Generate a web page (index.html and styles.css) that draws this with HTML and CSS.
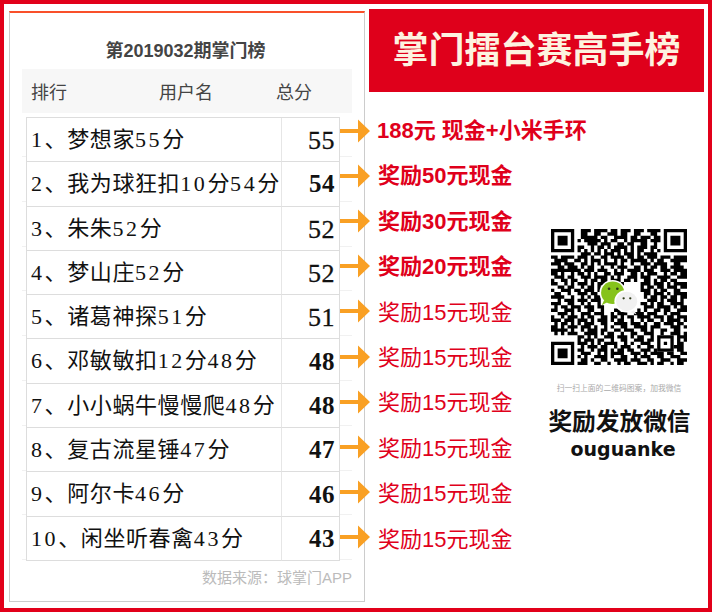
FILE: index.html
```html
<!DOCTYPE html>
<html lang="zh-CN">
<head>
<meta charset="utf-8">
<title>掌门擂台赛高手榜</title>
<link rel="stylesheet" href="styles.css">
</head>
<body>
<svg width="0" height="0" class="defs" aria-hidden="true">
  <symbol id="arrow" viewBox="0 0 30 24"><path d="M0 10h18V0.500l12 11.500-12 11.500V14H0z"/></symbol>
</svg>
<main class="frame">
  <section class="card">
    <h1 class="card-title">第2019032期掌门榜</h1>
    <div class="card-head"><span>排行</span><span>用户名</span><span>总分</span></div>
    <div class="band">
      <div class="rank-table">
        <div class="name"><span class="num">1</span>、梦想家<span class="num">55</span>分</div><div class="score">55</div>
        <div class="name"><span class="num">2</span>、我为球狂扣<span class="num">10</span>分<span class="num">54</span>分</div><div class="score strong">54</div>
        <div class="name"><span class="num">3</span>、朱朱<span class="num">52</span>分</div><div class="score">52</div>
        <div class="name"><span class="num">4</span>、梦山庄<span class="num">52</span>分</div><div class="score">52</div>
        <div class="name"><span class="num">5</span>、诸葛神探<span class="num">51</span>分</div><div class="score">51</div>
        <div class="name"><span class="num">6</span>、邓敏敏扣<span class="num">12</span>分<span class="num">48</span>分</div><div class="score strong">48</div>
        <div class="name"><span class="num">7</span>、小小蜗牛慢慢爬<span class="num">48</span>分</div><div class="score strong">48</div>
        <div class="name"><span class="num">8</span>、复古流星锤<span class="num">47</span>分</div><div class="score strong">47</div>
        <div class="name"><span class="num">9</span>、阿尔卡<span class="num">46</span>分</div><div class="score strong">46</div>
        <div class="name"><span class="num">10</span>、闲坐听春禽<span class="num">43</span>分</div><div class="score strong">43</div>
      </div>
    </div>
    <p class="source">数据来源：球掌门APP</p>
  </section>
  <section class="side">
    <div class="banner">掌门擂台赛高手榜</div>
    <div class="lower">
      <div class="arrows">
        <svg class="arrow"><use href="#arrow"/></svg>
        <svg class="arrow"><use href="#arrow"/></svg>
        <svg class="arrow"><use href="#arrow"/></svg>
        <svg class="arrow"><use href="#arrow"/></svg>
        <svg class="arrow"><use href="#arrow"/></svg>
        <svg class="arrow"><use href="#arrow"/></svg>
        <svg class="arrow"><use href="#arrow"/></svg>
        <svg class="arrow"><use href="#arrow"/></svg>
        <svg class="arrow"><use href="#arrow"/></svg>
        <svg class="arrow"><use href="#arrow"/></svg>
      </div>
      <ul class="prizes">
        <li class="prize lead">188元 现金+小米手环</li>
        <li class="prize top">奖励50元现金</li>
        <li class="prize top">奖励30元现金</li>
        <li class="prize top">奖励20元现金</li>
        <li class="prize">奖励15元现金</li>
        <li class="prize">奖励15元现金</li>
        <li class="prize">奖励15元现金</li>
        <li class="prize">奖励15元现金</li>
        <li class="prize">奖励15元现金</li>
        <li class="prize">奖励15元现金</li>
      </ul>
      <aside class="contact">
        <svg class="qr" viewBox="0 0 41 41" aria-label="二维码">
          <path class="qr-solid" fill-rule="evenodd" d="M0 0h7v7H0zM1 1v5h5V1zM2 2h3v3H2zM34 0h7v7h-7zM35 1v5h5V1zM36 2h3v3h-3zM0 34h7v7H0zM1 35v5h5v-5zM2 36h3v3H2zM32 32h5v5h-5zM33 33v3h3v-3zM34 34h1v1h-1z"/>
          <path class="qr-data" d="M9 0h3M13 0h4M18 0h2M21 0h3M25 0h3M29 0h4M9 1h2M13 1h2M17 1h3M21 1h2M25 1h2M30 1h2M9 2h5M15 2h2M19 2h4M24 2h2M27 2h3M31 2h2M8 3h1M10 3h5M16 3h1M18 3h2M22 3h1M24 3h5M30 3h3M11 4h3M15 4h3M20 4h2M23 4h2M27 4h2M31 4h1M8 5h2M12 5h1M14 5h2M17 5h1M19 5h4M24 5h1M26 5h3M30 5h2M8 6h1M10 6h1M12 6h1M14 6h1M16 6h1M18 6h3M22 6h1M24 6h1M26 6h2M30 6h1M32 6h1M9 7h3M13 7h2M16 7h3M20 7h1M22 7h3M26 7h1M28 7h4M0 8h2M3 8h3M6 8h1M8 8h3M12 8h1M15 8h2M18 8h4M23 8h2M26 8h2M29 8h3M33 8h3M37 8h4M1 9h4M7 9h2M10 9h1M12 9h3M16 9h1M19 9h1M21 9h2M24 9h5M30 9h1M32 9h2M36 9h3M39 9h2M0 10h3M4 10h2M6 10h1M9 10h2M12 10h1M14 10h1M16 10h4M21 10h1M24 10h1M27 10h3M31 10h4M37 10h2M2 11h2M5 11h3M9 11h1M11 11h2M15 11h1M18 11h1M20 11h3M25 11h2M28 11h1M30 11h2M33 11h2M36 11h4M0 12h6M6 12h3M10 12h3M14 12h3M19 12h1M21 12h1M23 12h4M28 12h3M33 12h3M37 12h4M0 13h2M3 13h1M6 13h1M8 13h2M11 13h1M13 13h1M16 13h2M19 13h3M24 13h2M27 13h1M29 13h3M34 13h1M36 13h2M39 13h2M1 14h3M5 14h2M9 14h3M13 14h4M18 14h1M20 14h1M23 14h3M27 14h3M32 14h4M38 14h3M0 15h1M3 15h2M6 15h2M10 15h1M12 15h2M15 15h2M18 15h3M22 15h2M25 15h1M28 15h2M31 15h1M33 15h2M36 15h2M0 16h2M4 16h1M6 16h1M8 16h3M12 16h1M14 16h3M19 16h1M21 16h1M27 16h3M31 16h3M35 16h1M37 16h4M2 17h2M5 17h2M9 17h1M11 17h2M14 17h1M27 17h1M29 17h2M32 17h2M35 17h3M39 17h2M0 18h1M3 18h3M7 18h2M10 18h3M14 18h2M27 18h3M31 18h1M33 18h2M37 18h2M1 19h2M5 19h1M8 19h3M12 19h2M28 19h2M31 19h3M35 19h1M37 19h4M0 20h4M6 20h1M9 20h1M11 20h1M13 20h2M28 20h1M30 20h2M33 20h2M36 20h2M39 20h2M2 21h1M4 21h3M8 21h3M12 21h3M29 21h3M33 21h1M35 21h3M39 21h1M0 22h3M5 22h2M9 22h1M11 22h1M14 22h1M27 22h2M30 22h1M32 22h2M36 22h4M1 23h1M3 23h2M6 23h3M10 23h3M14 23h2M28 23h3M32 23h4M37 23h1M39 23h2M0 24h2M4 24h3M8 24h1M11 24h2M15 24h1M19 24h2M26 24h1M28 24h1M31 24h2M34 24h2M38 24h3M2 25h3M6 25h1M9 25h3M13 25h3M18 25h1M20 25h3M25 25h3M29 25h3M34 25h1M36 25h3M0 26h1M3 26h1M5 26h3M9 26h1M11 26h2M15 26h2M18 26h2M21 26h1M23 26h2M26 26h4M31 26h3M35 26h2M38 26h3M0 27h3M4 27h3M8 27h3M12 27h1M14 27h3M18 27h1M20 27h2M24 27h1M27 27h1M29 27h2M33 27h1M35 27h4M40 27h1M1 28h1M3 28h2M6 28h1M8 28h1M10 28h3M15 28h2M19 28h4M24 28h3M28 28h1M31 28h2M34 28h3M38 28h2M0 29h2M3 29h1M5 29h3M9 29h3M13 29h1M16 29h1M18 29h1M21 29h2M25 29h4M30 29h3M36 29h3M40 29h1M0 30h5M6 30h1M9 30h1M11 30h3M15 30h2M19 30h2M22 30h3M27 30h2M30 30h1M33 30h2M37 30h2M1 31h1M3 31h1M5 31h3M10 31h4M15 31h1M17 31h2M21 31h1M24 31h2M28 31h3M33 31h1M36 31h3M40 31h1M8 32h2M11 32h1M13 32h1M16 32h3M20 32h3M24 32h1M26 32h2M30 32h1M38 32h3M8 33h1M10 33h3M14 33h2M18 33h1M21 33h2M25 33h3M29 33h2M38 33h1M40 33h1M8 34h3M12 34h1M14 34h1M16 34h4M22 34h1M24 34h1M27 34h3M38 34h2M9 35h1M11 35h3M15 35h2M19 35h1M21 35h3M26 35h1M29 35h2M37 35h3M8 36h2M12 36h1M14 36h3M18 36h1M20 36h2M23 36h2M27 36h3M31 36h1M38 36h2M9 37h3M14 37h1M16 37h1M18 37h4M24 37h3M28 37h1M30 37h4M35 37h2M39 37h2M8 38h1M10 38h1M13 38h4M18 38h1M21 38h2M25 38h1M27 38h3M32 38h2M36 38h3M9 39h2M12 39h1M15 39h2M19 39h4M24 39h3M29 39h2M33 39h3M38 39h3M8 40h3M13 40h2M17 40h1M20 40h1M22 40h2M26 40h3M30 40h1M32 40h2M36 40h1M38 40h2"/>
          <ellipse class="qr-halo" cx="18.600" cy="19.200" rx="4" ry="3.800"/>
          <path class="qr-green" d="M15.300 23l.7-1.500 1.500.3z"/>
          <ellipse class="qr-green" cx="18.600" cy="19.200" rx="3.500" ry="3.400"/>
          <circle class="qr-eye" cx="17.500" cy="18" r=".4"/>
          <circle class="qr-eye" cx="20" cy="18" r=".4"/>
          <ellipse class="qr-halo" cx="22.800" cy="21.800" rx="3.700" ry="3.400"/>
          <path class="qr-bubble" d="M25 24.500l.8 1.200-1.900-.6z"/>
          <ellipse class="qr-bubble" cx="22.800" cy="21.800" rx="3.200" ry="2.900"/>
          <circle class="qr-eye" cx="21.900" cy="20.900" r=".35"/>
          <circle class="qr-eye" cx="23.900" cy="20.900" r=".35"/>
        </svg>
        <p class="caption">扫一扫上面的二维码图案，加我微信</p>
        <p class="contact-title">奖励发放微信</p>
        <p class="contact-id">ouguanke</p>
      </aside>
    </div>
  </section>
</main>
</body>
</html>
```
FILE: styles.css
```css
* { box-sizing: border-box; }
html, body { margin: 0; padding: 0; }
body {
  width: 712px;
  height: 612px;
  overflow: hidden;
  background: #fff;
  font-family: "Liberation Sans", "Noto Sans CJK SC", sans-serif;
}
.defs { position: absolute; }
.frame {
  display: flex;
  gap: 4px;
  width: 712px;
  height: 612px;
  padding: 5px 4px 0 5px;
  border: 4px solid #e2001a;
  background: #fff;
}
.card {
  flex: none;
  width: 356px;
  height: 591px;
  margin-top: 2px;
  border: 1px solid #ccc;
  border-top: 2px solid #f9502a;
  background: #fff;
}
.card-title {
  margin: 0 0 5px;
  padding: 25px 3px 0 0;
  font-size: 18px;
  font-weight: 700;
  line-height: 26px;
  text-align: center;
  color: #444;
}
.card-head {
  display: grid;
  grid-template-columns: 128px 117px auto;
  align-items: center;
  height: 44px;
  margin: 0 12px;
  padding-left: 9px;
  background: #f7f7f7;
  font-size: 18px;
  color: #444;
}
.band {
  height: 447px;
  margin: 0 12px;
  padding: 4px 12px 0 4px;
  background: repeating-linear-gradient(to bottom, transparent 0, transparent 43px, #f1f1f1 43px, #f1f1f1 44px, transparent 44px, transparent 44.8px);
}
.rank-table {
  display: grid;
  grid-template-columns: 255px 1fr;
  grid-auto-rows: 44.300px;
  width: 314px;
  height: 443.500px;
  border-top: 1px solid #ddd;
  border-left: 1px solid #ddd;
  background: #fff;
  font-family: "Liberation Serif", "Noto Sans CJK SC", serif;
  color: #111;
}
.name {
  display: block;
  padding: 2px 0 0 4px;
  border-right: 1px solid #e6e6e6;
  border-bottom: 1px solid #ddd;
  font-size: 22px;
  line-height: 40px;
  letter-spacing: .6px;
  white-space: nowrap;
}
.num { letter-spacing: 2.600px; }
.score {
  display: flex;
  align-items: center;
  justify-content: flex-end;
  padding: 3px 4px 0 0;
  border-right: 1px solid #ddd;
  border-bottom: 1px solid #ddd;
  font-size: 26px;
  letter-spacing: .5px;
  -webkit-text-stroke: .3px #111;
}
.score.strong { padding-top: 1px; font-size: 25px; font-weight: 700; -webkit-text-stroke: 0; }
.source {
  margin: 8px 0 0;
  padding-right: 12px;
  font-size: 15px;
  line-height: 20px;
  text-align: right;
  color: #bbb;
}
.side { flex: none; width: 335px; }
.banner {
  height: 83px;
  background: #df001b;
  color: #fdf3e0;
  font-size: 36px;
  font-weight: 700;
  line-height: 83px;
  text-align: center;
}
.lower { display: flex; }
.arrows {
  flex: none;
  display: grid;
  grid-auto-rows: 45.100px;
  align-items: center;
  width: 30px;
  height: 451px;
  margin: 16.500px 0 0 -29px;
  position: relative;
}
.prizes {
  flex: none;
  width: 157px;
  margin: 15.800px 0 0 7px;
  padding: 0;
  list-style: none;
}
.prize {
  height: 45.450px;
  padding-left: 1px;
  font-size: 22px;
  line-height: 45.450px;
  color: #e0001b;
  white-space: nowrap;
}
.prize.top { font-weight: 700; }
.prize.lead { padding-left: 0; font-weight: 700; }
.arrow { display: block; width: 30px; height: 24px; fill: #f9a024; }
.contact {
  flex: none;
  width: 170px;
  padding-top: 137px;
  text-align: center;
}
.qr { display: block; width: 136px; height: 136px; margin: 0 auto; }
.qr-solid { fill: #000; }
.qr-data { fill: none; stroke: #000; stroke-width: 1; transform: translateY(.5px); }
.qr-halo { fill: #fff; }
.qr-green { fill: #86c31c; }
.qr-bubble { fill: #f1f1f1; }
.qr-eye { fill: #2f3a1a; }
.caption {
  margin: 18px 0 0;
  font-size: 7.800px;
  line-height: 12px;
  color: #aaa;
  white-space: nowrap;
}
.contact-title {
  margin: 12px 0 0;
  padding-left: 1px;
  font-size: 23.700px;
  font-weight: 700;
  line-height: 30px;
  color: #111;
  white-space: nowrap;
}
.contact-id {
  margin: 0;
  padding-left: 8px;
  font-family: "DejaVu Sans", sans-serif;
  font-size: 19px;
  font-weight: 700;
  line-height: 25px;
  color: #111;
}
```
